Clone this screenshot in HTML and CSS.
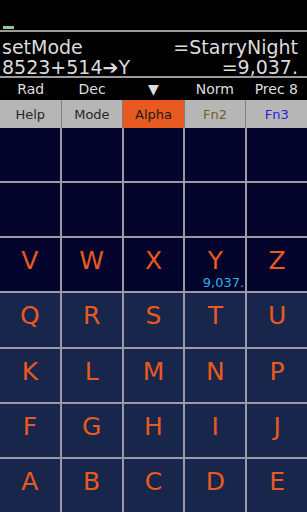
FILE: index.html
```html
<!DOCTYPE html>
<html lang="en">
<head>
  <meta charset="UTF-8">
  <meta name="viewport" content="width=device-width, initial-scale=1.0">
  <title>Calculator</title>
  <link rel="stylesheet" href="styles.css">
</head>
<body>

  <div class="top">
    <div class="battery"></div>
  </div>

  <div class="display">
    <div class="line"><span>setMode</span><span>=StarryNight</span></div>
    <div class="line"><span>8523+514➔Y</span><span>=9,037.</span></div>
  </div>

  <div class="status">
    <div>Rad</div>
    <div>Dec</div>
    <div>▼</div>
    <div>Norm</div>
    <div>Prec 8</div>
  </div>

  <div class="menu">
    <div class="menu-btn">Help</div>
    <div class="menu-btn">Mode</div>
    <div class="menu-btn active">Alpha</div>
    <div class="menu-btn fn2">Fn2</div>
    <div class="menu-btn fn3">Fn3</div>
  </div>

  <div class="keys">
    <!-- empty rows -->
    <div class="key dark"></div>
    <div class="key dark"></div>
    <div class="key dark"></div>
    <div class="key dark"></div>
    <div class="key dark"></div>
    <div class="key dark"></div>
    <div class="key dark"></div>
    <div class="key dark"></div>
    <div class="key dark"></div>
    <div class="key dark"></div>

    <div class="key dark">V</div>
    <div class="key dark">W</div>
    <div class="key dark">X</div>
    <div class="key dark">Y<span class="val">9,037.</span></div>
    <div class="key dark">Z</div>

    <div class="key">Q</div>
    <div class="key">R</div>
    <div class="key">S</div>
    <div class="key">T</div>
    <div class="key">U</div>

    <div class="key">K</div>
    <div class="key">L</div>
    <div class="key">M</div>
    <div class="key">N</div>
    <div class="key">P</div>

    <div class="key">F</div>
    <div class="key">G</div>
    <div class="key">H</div>
    <div class="key">I</div>
    <div class="key">J</div>

    <div class="key">A</div>
    <div class="key">B</div>
    <div class="key">C</div>
    <div class="key">D</div>
    <div class="key">E</div>
  </div>

</body>
</html>
```

FILE: styles.css
```css
body {
  margin: 0;
  padding: 0;
  width: 307px;
  height: 512px;
  background-color: #000;
  font-family: "DejaVu Sans", sans-serif;
  overflow: hidden;
  display: flex;
  flex-direction: column;
}

.top {
  height: 30px;
  flex-shrink: 0;
  display: flex;
  align-items: flex-end;
  padding-left: 3px;
  box-sizing: border-box;
}

.battery {
  width: 11px;
  height: 3px;
  margin-bottom: 1px;
  background-color: #8fc98f;
}

.display {
  flex-shrink: 0;
  border-top: 2px solid #9a9a9a;
  border-bottom: 2px solid #9a9a9a;
  height: 48px;
  padding: 5px 9px 0 2px;
  box-sizing: border-box;
  color: #dcdcdc;
  font-size: 19px;
  line-height: 20px;
}

.line {
  display: flex;
  justify-content: space-between;
}

.status {
  flex-shrink: 0;
  height: 22px;
  display: grid;
  grid-template-columns: repeat(5, 1fr);
  align-items: center;
  color: #dedede;
  font-size: 14px;
  text-align: center;
}

.menu {
  flex-shrink: 0;
  height: 28px;
  display: grid;
  grid-template-columns: repeat(5, 1fr);
  gap: 1px;
  background-color: #7c7c7c;
}

.menu-btn {
  background-color: #b6b6b6;
  color: #262626;
  font-size: 13px;
  display: flex;
  align-items: center;
  justify-content: center;
}

.menu-btn.active {
  background-color: #e85a1f;
  color: #1a1a1a;
}

.menu-btn.fn2 {
  color: #6f6116;
}

.menu-btn.fn3 {
  color: #2222dd;
}

.keys {
  flex: 1;
  display: grid;
  grid-template-columns: repeat(5, 1fr);
  grid-template-rows: repeat(7, 1fr);
  column-gap: 2px;
  row-gap: 2px;
  background-color: #9a9aa6;
}

.key {
  position: relative;
  background-color: #17264a;
  color: #e85a1f;
  font-size: 25px;
  display: flex;
  align-items: center;
  justify-content: center;
  padding-bottom: 8px;
  box-sizing: border-box;
}

.key.dark {
  background-color: #03032c;
}

.val {
  position: absolute;
  right: 1px;
  bottom: 1px;
  font-size: 13px;
  color: #2fb0e8;
}
```
